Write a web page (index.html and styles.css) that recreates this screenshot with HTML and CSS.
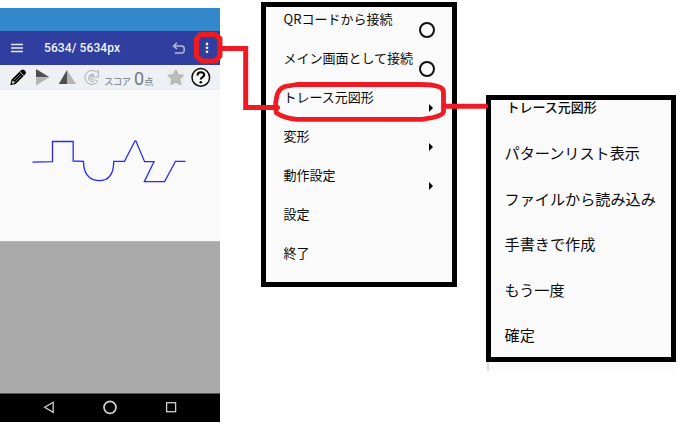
FILE: index.html
```html
<!DOCTYPE html>
<html lang="ja">
<head>
<meta charset="utf-8">
<title>トレース元図形</title>
<link rel="stylesheet" href="styles.css">
</head>
<body>
<main class="board">
  <section class="phone">
    <div class="status"></div>
    <header class="appbar">
      <svg class="burger" width="12" height="10" viewBox="0 0 12 10"><path d="M0 1.5h12M0 5h12M0 8.5h12" stroke="#e8eaf6" stroke-width="1.3"/></svg>
      <h1 class="title">5634/ 5634px</h1>
      <svg class="undo" width="14" height="14" viewBox="0 0 14 14"><path d="M1.6 5H9.6Q12.3 5 12.3 8.4Q12.3 12 9.6 12H2.8M4.9 1.8L1.6 5l3.3 3" fill="none" stroke="#b5bad6" stroke-width="1.5"/></svg>
      <svg class="dots" width="4" height="12" viewBox="0 0 4 12"><g fill="#fff"><circle cx="2" cy="1.9" r="1.3"/><circle cx="2" cy="5.8" r="1.3"/><circle cx="2" cy="9.7" r="1.3"/></g></svg>
    </header>
    <div class="tools">
      <svg width="220" height="25" viewBox="0 0 220 25">
        <rect x="9" y="4" width="18" height="17" fill="#f1f1f1"/>
        <g transform="translate(10.3 20.2) rotate(-45)">
          <path d="M0 0L4.6-3H18Q20.6-3 20.6-.6V.6Q20.6 3 18 3H4.6Z" fill="#050505"/>
          <path d="M2.2 0L5-1.7V1.7Z" fill="#eee"/><path d="M6-1H15M6 1H15" stroke="#aaa" stroke-width=".7"/><path d="M16.3-3V3" stroke="#ddd" stroke-width=".9"/>
        </g>
        <path d="M36 4L49.5 12.3H36Z" fill="#505050"/><path d="M36 12.3H49.5L36 20.5Z" fill="#b5b5b5"/>
        <path d="M67 5V19H58.7Z" fill="#505050"/><path d="M67 5L76 19H67Z" fill="#b5b5b5"/>
        <g fill="none" stroke="#a3a3a3" stroke-width=".9">
          <path d="M97.6 16.5A7 7 0 1 1 96.4 7L98.3 5.4V12H91.8L94 9.6A3.7 3.7 0 1 0 95.5 14.8Z"/>
          <path d="M93.6 13.8A2 2 0 1 1 93 10.8"/>
        </g>
        <text x="104" y="19.5" class="score">スコア</text>
        <text x="134" y="19.5" class="value">0</text>
        <text x="144" y="19.5" class="unit">点</text>
        <rect x="167" y="4" width="17" height="17" fill="#e9ebec"/>
        <path d="M175.8 5L178.1 9.8L183.4 10.5L179.6 14.1L180.6 19.4L175.8 17L171 19.4L172 14.1L168.2 10.5L173.5 9.8Z" fill="#bdbdbd" stroke="#ababab" stroke-width="1"/>
        <circle cx="200.8" cy="12.4" r="8.8" fill="#f6f6f6" stroke="#080808" stroke-width="1.5"/>
        <path d="M197.5 10.4C197.5 6.2 204.2 6.5 204.2 9.8C204.2 12.2 200.8 12 200.8 14.5" fill="none" stroke="#080808" stroke-width="2.1"/><circle cx="200.8" cy="17.2" r="1.3" fill="#080808"/>
      </svg>
    </div>
    <div class="canvas">
      <svg width="220" height="151" viewBox="0 90 220 151"><path d="M32.5 162.2L52.5 161.7V141.5H73.2V161L83.5 161.4C83.5 172 88 180.6 99 180.6C110 180.6 113.7 172 113.7 161.4H124.5L135 140.8H135.8L144.6 161.7H154L144.3 181.6H164.6L175.5 161.3H185.5" fill="none" stroke="#2828ff" stroke-width="1.3"/></svg>
    </div>
    <div class="filler"></div>
    <nav class="nav">
      <svg width="220" height="28" viewBox="0 394 220 28"><g fill="none" stroke="#d0d0d0" stroke-width="1.3"><path d="M53.2 402.3V412.3L44.7 407.3Z"/><circle cx="110" cy="407.3" r="6" stroke-width="1.7"/><rect x="166.6" y="402.7" width="9" height="9"/></g></svg>
    </nav>
  </section>

  <ul class="menu">
    <li><span>QRコードから接続</span><i class="radio"></i></li>
    <li><span>メイン画面として接続</span><i class="radio"></i></li>
    <li><span>トレース元図形</span><i class="more"></i></li>
    <li><span>変形</span><i class="more"></i></li>
    <li><span>動作設定</span><i class="more"></i></li>
    <li><span>設定</span></li>
    <li><span>終了</span></li>
  </ul>

  <section class="sub">
    <div class="submenu">
      <h2>トレース元図形</h2>
      <ul>
        <li>パターンリスト表示</li>
        <li>ファイルから読み込み</li>
        <li>手書きで作成</li>
        <li>もう一度</li>
        <li>確定</li>
      </ul>
    </div>
    <div class="edge"></div>
  </section>

  <svg class="callouts" width="686" height="424" viewBox="0 0 686 424">
    <g fill="none" stroke="#ed1c24" stroke-width="5" stroke-linejoin="round" stroke-linecap="round">
      <path d="M200.5 34.5H215L220 38.5V56L215 61H202L196.5 56.5V39Z"/>
      <path d="M222 48.5H245.7V107.5H277.5" stroke-linejoin="miter"/>
      <path d="M297 84.5H420Q443.5 84.5 443.5 92V112Q443.5 115 433 117.5L422 119.3H297Q285 118.5 276.5 113Q274.5 107 276.5 98Q277.5 89 285 86.5Z" stroke-width="4.8"/>
      <path d="M446 106.3H485.5"/>
    </g>
  </svg>
</main>
</body>
</html>
```

FILE: styles.css
```css
* { box-sizing: border-box; }

body {
  margin: 0;
  background: #fff;
  color: #0a0a0a;
  font-family: "Noto Sans CJK JP", sans-serif;
}

.board {
  position: relative;
  display: flex;
  align-items: flex-start;
  width: 686px;
  height: 424px;
  overflow: hidden;
}

svg { display: block; }
ul { list-style: none; margin: 0; padding: 0; }

/* Phone */
.phone {
  display: flex;
  flex-direction: column;
  width: 220px;
  height: 414px;
  margin-top: 8px;
}
.status { height: 23px; background: #3388cc; }
.appbar {
  display: flex;
  align-items: center;
  height: 34px;
  padding: 0 11px;
  background: #303f9f;
}
.title {
  width: 118px;
  margin: 0 0 0 21px;
  color: #f3f4fb;
  font: 500 12px/35px Roboto, sans-serif;
  letter-spacing: 0.1px;
  white-space: pre;
}
.undo { margin-left: 10px; }
.dots { margin-left: 18.5px; }
.tools { height: 25px; background: #edf1f5; }
.score { font-size: 9.5px; fill: #777; letter-spacing: -0.8px; }
.value { font: 18px Roboto, sans-serif; fill: #777; }
.unit { font-size: 9.5px; fill: #777; }
.canvas { height: 151px; background: #fafafa; }
.filler { height: 152px; background: #aaa; border-top: 1px solid #b5b5b5; }
.nav { height: 29px; background: #000; border-top: 1px solid #555; }

/* Options menu */
.menu {
  width: 196px;
  height: 285px;
  margin: 2px 0 0 41px;
  border: 5px solid #000;
  padding-left: 17.5px;
  background: linear-gradient(90deg, #fff 5px, #fafafa 5px);
  font-size: 13px;
  line-height: 23px;
}
.menu li {
  display: flex;
  justify-content: space-between;
  height: 39px;
  padding-right: 17px;
  white-space: nowrap;
}
.menu span { width: 131px; flex: none; }
.radio {
  flex: none;
  width: 16px;
  height: 16px;
  margin-top: 15px;
  border: 2px solid #111;
  border-radius: 50%;
}
.more {
  margin: 18.5px 2px 0 0;
  width: 0;
  height: 0;
  align-self: flex-start;
  border: solid transparent;
  border-width: 4px 0 4px 4px;
  border-left-color: #000;
}

/* Submenu */
.sub { width: 190px; margin: 95px 0 0 29px; }
.submenu {
  height: 267px;
  padding-left: 13.5px;
  border: 5px solid #000;
  background: #fafafa;
  white-space: nowrap;
}
.submenu h2 {
  height: 31px;
  margin: 0 0 0 2px;
  font-size: 13px;
  font-weight: 500;
  line-height: 13px;
}
.submenu li { height: 45.5px; font-size: 15.15px; line-height: 43px; }
.edge {
  height: 9px;
  margin: 0 1px;
  border-left: 2px solid #ddd;
  background: #fafafa;
}

/* Annotation strokes laid over the panels */
.callouts { position: absolute; left: 0; top: 0; }
```
